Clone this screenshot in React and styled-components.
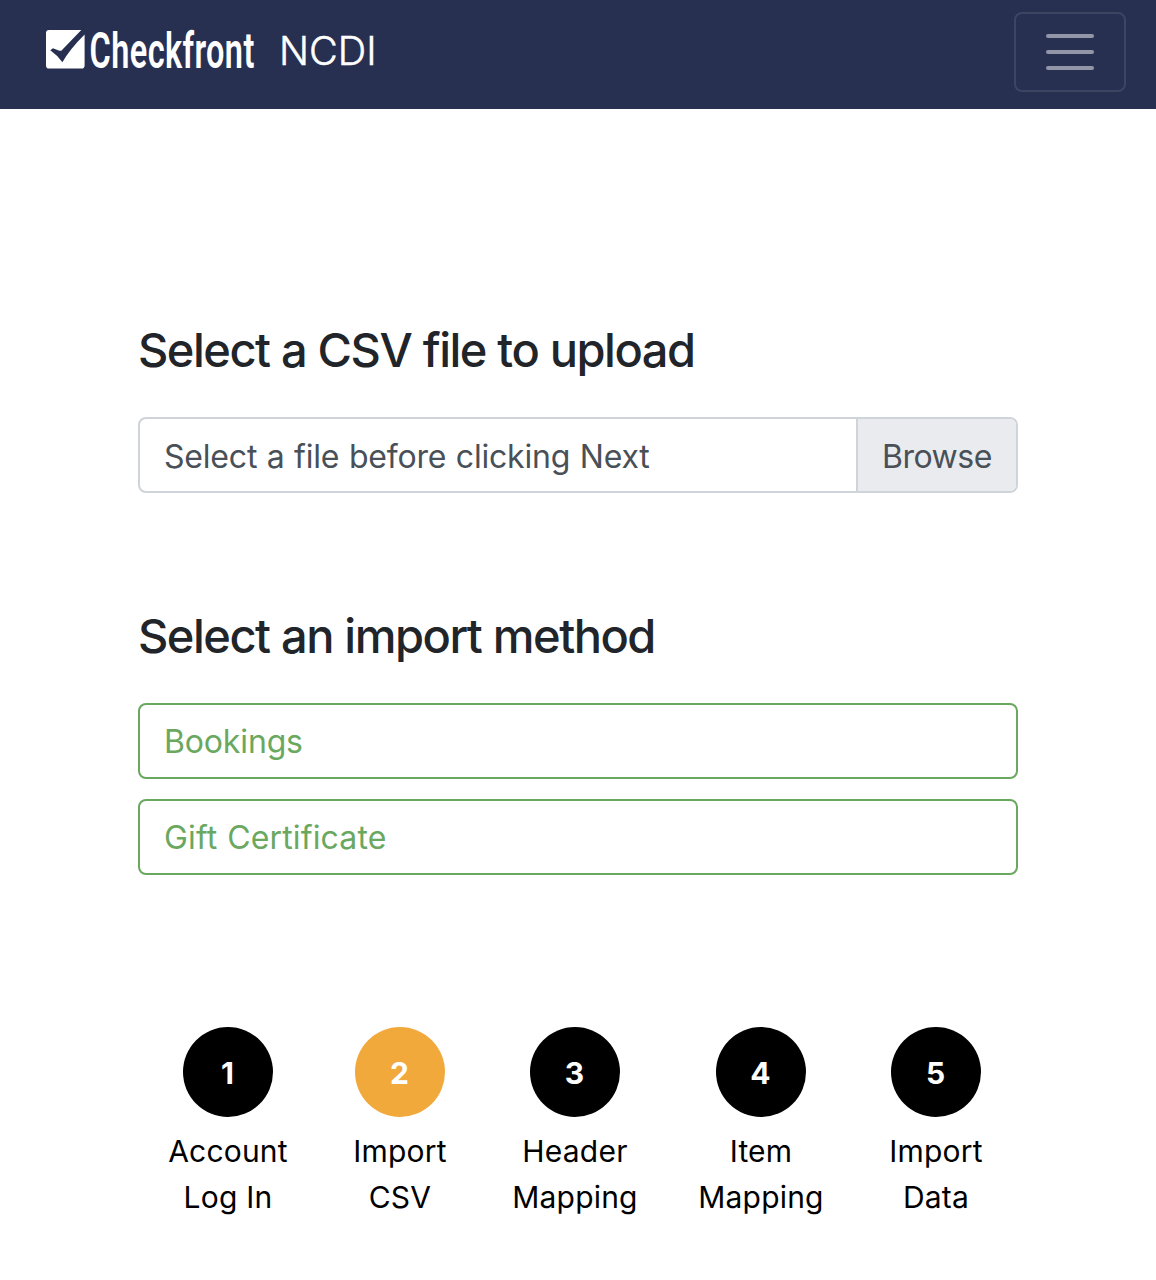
import React from "react";
import styled, { createGlobalStyle } from "styled-components";

const GlobalStyle = createGlobalStyle`
  *, *::before, *::after { box-sizing: border-box; }
  body {
    margin: 0;
    background: #fff;
    color: #212529;
    font-family: Inter, "Liberation Sans", sans-serif;
  }
`;

const Navbar = styled.nav`
  display: flex;
  align-items: flex-start;
  justify-content: space-between;
  height: 109px;
  padding: 12px 30px 0 46px;
  background: #283052;
`;

const Brand = styled.a`
  display: flex;
  align-items: flex-start;
  padding-top: 10px;
  color: #fff;
  text-decoration: none;
`;

const Logo = styled.svg`
  display: block;
  width: 212px;
  height: 56px;
  overflow: visible;
`;

const Wordmark = styled.text`
  font-family: Roboto, sans-serif;
  font-size: 50px;
  font-weight: 600;
  letter-spacing: 0.6px;
  fill: #fff;
`;

const BrandName = styled.span`
  margin-left: 21px;
  padding-top: 5px;
  font-size: 39.5px;
  font-weight: 300;
  line-height: 48px;
  letter-spacing: 0;
  -webkit-text-stroke: 0.5px #fff;
`;

const Toggler = styled.button`
  display: flex;
  flex-direction: column;
  align-items: center;
  justify-content: center;
  gap: 12px;
  width: 112px;
  height: 80px;
  padding: 0;
  background: transparent;
  border: 2px solid #3e4563;
  border-radius: 8px;
`;

const TogglerBar = styled.span`
  width: 48px;
  height: 4px;
  border-radius: 2px;
  background: #9396a9;
`;

const Main = styled.main`
  width: 880px;
  margin: 0 auto;
  padding-top: 212px;
`;

const Section = styled.section`
  margin-bottom: ${(p) => p.$space}px;
`;

const Title = styled.h2`
  margin: 0 0 39px;
  font-size: 47px;
  font-weight: 500;
  line-height: 57px;
  letter-spacing: -1.5px;
  word-spacing: 0.4px;
  white-space: nowrap;
`;

const FilePicker = styled.label`
  display: flex;
  height: 76px;
  border: 2px solid #ced4da;
  border-radius: 8px;
  overflow: hidden;
  color: #495057;
  font-size: 32px;
  line-height: 75px;
  letter-spacing: -0.2px;
  word-spacing: 0.8px;
  cursor: pointer;
`;

const FileName = styled.span`
  flex: 1;
  padding-left: 24px;
`;

const Browse = styled.span`
  width: 160px;
  padding-left: 24px;
  border-left: 2px solid #ced4da;
  background: #e9ebee;
  letter-spacing: -0.5px;
`;

const Methods = styled.div`
  display: flex;
  flex-direction: column;
  gap: 20px;
`;

const MethodButton = styled.button`
  height: 76px;
  padding: 2px 24px 0;
  border: 2px solid #6aa860;
  border-radius: 8px;
  background: #fff;
  color: #6aa860;
  font: inherit;
  font-size: 32px;
  line-height: 70px;
  letter-spacing: ${(p) => p.$tracking}px;
  word-spacing: 0.8px;
  text-align: left;
`;

const Steps = styled.ol`
  display: flex;
  gap: 60px;
  margin: 0;
  padding: 0 0 0 30px;
  list-style: none;
`;

const Step = styled.li`
  display: flex;
  flex-direction: column;
  align-items: center;
  width: ${(p) => p.$width}px;
`;

const StepNumber = styled.span`
  width: 90px;
  height: 90px;
  padding-right: 1px;
  border-radius: 50%;
  background: ${(p) => (p.$active ? "#f1a93c" : "#000")};
  color: #fff;
  font-size: 30px;
  font-weight: 700;
  line-height: 92px;
  text-align: center;
`;

const StepLabel = styled.span`
  margin-top: 11px;
  color: #000;
  font-size: 30px;
  line-height: 46px;
  letter-spacing: 0.2px;
  text-align: center;
  white-space: pre-line;
`;

const steps = [
  { label: "Account\nLog In", width: 120 },
  { label: "Import\nCSV", width: 104, active: true },
  { label: "Header\nMapping", width: 126 },
  { label: "Item\nMapping", width: 126 },
  { label: "Import\nData", width: 104 },
];

export default function App() {
  return (
    <>
      <GlobalStyle />
      <Navbar>
        <Brand>
          <Logo viewBox="0 0 212 56">
            <path
              d="M3 8H35.300L15.300 28.800Q14.200 29 12.700 28.400L7 26.300L4.300 28.300Q11 33 16.400 40.200Q24 27 38.600 12.500V43.500Q38.600 46.600 35.600 46.600H3Q0 46.600 0 43.500V11Q0 8 3 8Z"
              fill="#fff"
            />
            <Wordmark transform="translate(43.600 46) scale(0.650 1)">Checkfront</Wordmark>
          </Logo>
          <BrandName>NCDI</BrandName>
        </Brand>
        <Toggler aria-label="Toggle navigation">
          <TogglerBar />
          <TogglerBar />
          <TogglerBar />
        </Toggler>
      </Navbar>
      <Main>
        <Section $space={114}>
          <Title>Select a CSV file to upload</Title>
          <FilePicker>
            <FileName>Select a file before clicking Next</FileName>
            <Browse>Browse</Browse>
          </FilePicker>
        </Section>
        <Section $space={152}>
          <Title>Select an import method</Title>
          <Methods>
            <MethodButton $tracking={-0.15}>Bookings</MethodButton>
            <MethodButton $tracking={0.13}>Gift Certificate</MethodButton>
          </Methods>
        </Section>
        <Steps>
          {steps.map((step, i) => (
            <Step key={i} $width={step.width}>
              <StepNumber $active={step.active}>{i + 1}</StepNumber>
              <StepLabel>{step.label}</StepLabel>
            </Step>
          ))}
        </Steps>
      </Main>
    </>
  );
}
